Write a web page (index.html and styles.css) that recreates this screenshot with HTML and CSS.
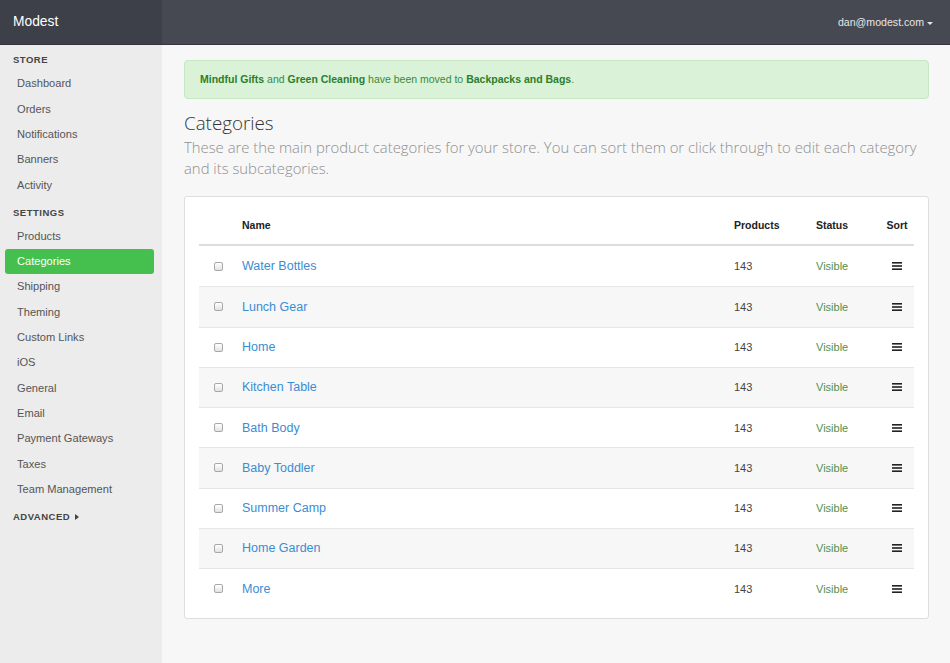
FILE: index.html
```html
<!DOCTYPE html>
<html>
<head>
<meta charset="utf-8">
<link rel="stylesheet" href="styles.css">
</head>
<body>
<div class="app">
  <header class="topbar">
    <div class="brand">Modest</div>
    <div class="topbar-right">
      <span class="user">dan@modest.com <span class="caret"></span></span>
    </div>
  </header>
  <div class="body">
    <aside class="sidebar">
      <div class="nav-head first">STORE</div>
      <a class="nav-item">Dashboard</a>
      <a class="nav-item">Orders</a>
      <a class="nav-item">Notifications</a>
      <a class="nav-item">Banners</a>
      <a class="nav-item">Activity</a>
      <div class="nav-head">SETTINGS</div>
      <a class="nav-item">Products</a>
      <a class="nav-item active">Categories</a>
      <a class="nav-item">Shipping</a>
      <a class="nav-item">Theming</a>
      <a class="nav-item">Custom Links</a>
      <a class="nav-item">iOS</a>
      <a class="nav-item">General</a>
      <a class="nav-item">Email</a>
      <a class="nav-item">Payment Gateways</a>
      <a class="nav-item">Taxes</a>
      <a class="nav-item">Team Management</a>
      <div class="nav-head adv">ADVANCED <span class="tri"></span></div>
    </aside>
    <main class="main">
      <div class="alert"><b>Mindful Gifts</b> and <b>Green Cleaning</b> have been moved to <b>Backpacks and Bags</b>.</div>
      <h1 class="title">Categories</h1>
      <p class="lead">These are the main product categories for your store. You can sort them or click through to edit each category and its subcategories.</p>
      <div class="card">
        <div class="row head">
          <div></div>
          <div>Name</div>
          <div>Products</div>
          <div>Status</div>
          <div class="c">Sort</div>
        </div>
        <div class="row"><div><span class="cb"></span></div><div><a class="link">Water Bottles</a></div><div class="num">143</div><div class="vis">Visible</div><div class="c"><svg class="sort" width="10" height="8" viewBox="0 0 10 8"><rect x="0" y="0" width="10" height="1.6" fill="#222"/><rect x="0" y="3.2" width="10" height="1.6" fill="#222"/><rect x="0" y="6.4" width="10" height="1.6" fill="#222"/></svg></div></div>
        <div class="row"><div><span class="cb"></span></div><div><a class="link">Lunch Gear</a></div><div class="num">143</div><div class="vis">Visible</div><div class="c"><svg class="sort" width="10" height="8" viewBox="0 0 10 8"><rect x="0" y="0" width="10" height="1.6" fill="#222"/><rect x="0" y="3.2" width="10" height="1.6" fill="#222"/><rect x="0" y="6.4" width="10" height="1.6" fill="#222"/></svg></div></div>
        <div class="row"><div><span class="cb"></span></div><div><a class="link">Home</a></div><div class="num">143</div><div class="vis">Visible</div><div class="c"><svg class="sort" width="10" height="8" viewBox="0 0 10 8"><rect x="0" y="0" width="10" height="1.6" fill="#222"/><rect x="0" y="3.2" width="10" height="1.6" fill="#222"/><rect x="0" y="6.4" width="10" height="1.6" fill="#222"/></svg></div></div>
        <div class="row"><div><span class="cb"></span></div><div><a class="link">Kitchen Table</a></div><div class="num">143</div><div class="vis">Visible</div><div class="c"><svg class="sort" width="10" height="8" viewBox="0 0 10 8"><rect x="0" y="0" width="10" height="1.6" fill="#222"/><rect x="0" y="3.2" width="10" height="1.6" fill="#222"/><rect x="0" y="6.4" width="10" height="1.6" fill="#222"/></svg></div></div>
        <div class="row"><div><span class="cb"></span></div><div><a class="link">Bath Body</a></div><div class="num">143</div><div class="vis">Visible</div><div class="c"><svg class="sort" width="10" height="8" viewBox="0 0 10 8"><rect x="0" y="0" width="10" height="1.6" fill="#222"/><rect x="0" y="3.2" width="10" height="1.6" fill="#222"/><rect x="0" y="6.4" width="10" height="1.6" fill="#222"/></svg></div></div>
        <div class="row"><div><span class="cb"></span></div><div><a class="link">Baby Toddler</a></div><div class="num">143</div><div class="vis">Visible</div><div class="c"><svg class="sort" width="10" height="8" viewBox="0 0 10 8"><rect x="0" y="0" width="10" height="1.6" fill="#222"/><rect x="0" y="3.2" width="10" height="1.6" fill="#222"/><rect x="0" y="6.4" width="10" height="1.6" fill="#222"/></svg></div></div>
        <div class="row"><div><span class="cb"></span></div><div><a class="link">Summer Camp</a></div><div class="num">143</div><div class="vis">Visible</div><div class="c"><svg class="sort" width="10" height="8" viewBox="0 0 10 8"><rect x="0" y="0" width="10" height="1.6" fill="#222"/><rect x="0" y="3.2" width="10" height="1.6" fill="#222"/><rect x="0" y="6.4" width="10" height="1.6" fill="#222"/></svg></div></div>
        <div class="row"><div><span class="cb"></span></div><div><a class="link">Home Garden</a></div><div class="num">143</div><div class="vis">Visible</div><div class="c"><svg class="sort" width="10" height="8" viewBox="0 0 10 8"><rect x="0" y="0" width="10" height="1.6" fill="#222"/><rect x="0" y="3.2" width="10" height="1.6" fill="#222"/><rect x="0" y="6.4" width="10" height="1.6" fill="#222"/></svg></div></div>
        <div class="row"><div><span class="cb"></span></div><div><a class="link">More</a></div><div class="num">143</div><div class="vis">Visible</div><div class="c"><svg class="sort" width="10" height="8" viewBox="0 0 10 8"><rect x="0" y="0" width="10" height="1.6" fill="#222"/><rect x="0" y="3.2" width="10" height="1.6" fill="#222"/><rect x="0" y="6.4" width="10" height="1.6" fill="#222"/></svg></div></div>
      </div>
    </main>
  </div>
</div>
</body>
</html>
```
FILE: styles.css
```css
* { box-sizing: border-box; }
html, body { margin: 0; padding: 0; }
body {
  font-family: "Liberation Sans", Arial, sans-serif;
  background: #f7f7f7;
  width: 950px;
  height: 663px;
  overflow: hidden;
}
.app { display: flex; flex-direction: column; height: 663px; }
.topbar {
  display: flex;
  height: 45px;
  background: #464952;
  border-bottom: 1px solid #34363c;
  flex: none;
}
.brand {
  width: 162px;
  background: #3d4048;
  color: #fff;
  font-size: 13.8px;
  padding-left: 13px;
  line-height: 44px;
}
.topbar-right {
  flex: 1;
  display: flex;
  justify-content: flex-end;
  align-items: center;
  padding-right: 17px;
}
.user { color: #e6e6e6; font-size: 10.6px; }
.caret {
  display: inline-block;
  width: 0; height: 0;
  border-left: 3px solid transparent;
  border-right: 3px solid transparent;
  border-top: 3px solid #e6e6e6;
  vertical-align: middle;
  margin-left: 0;
}
.body { display: flex; flex: 1; }
.sidebar {
  width: 162px;
  background: #ececec;
  flex: none;
  padding: 7px 8px 0 5px;
}
.nav-head {
  font-size: 9.5px;
  font-weight: bold;
  letter-spacing: 0.5px;
  color: #444;
  padding-left: 8px;
  height: 23px;
  line-height: 24px;
  margin-top: 3px;
}
.nav-head.first { margin-top: 0; height: 19.35px; line-height: 16px; }
.nav-head.adv { margin-top: 2px; height: 26px; line-height: 26px; }
.tri {
  display: inline-block;
  width: 0; height: 0;
  border-top: 3.5px solid transparent;
  border-bottom: 3.5px solid transparent;
  border-left: 4px solid #444;
  margin-left: 2px;
  vertical-align: 0;
}
.nav-item {
  display: block;
  height: 25.3px;
  line-height: 25.3px;
  padding-left: 12px;
  font-size: 11.1px;
  color: #555;
  border-radius: 3px;
}
.nav-item.active { background: #45bf4e; color: #fff; }
.main { flex: 1; padding: 15px 22px 0 22px; }
.alert {
  height: 39px;
  background: #d9f2d8;
  border: 1px solid #c5e7c3;
  border-radius: 4px;
  color: #3a8a3a;
  font-size: 10.5px;
  line-height: 37px;
  padding-left: 15px;
}
.alert b { color: #2b7f2b; }
.title {
  margin: 11px 0 0 0;
  font-family: "Open Sans", sans-serif;
  font-weight: 300;
  font-size: 18.8px;
  line-height: 26px;
  color: #333;
}
.lead {
  margin: 0;
  font-family: "Open Sans", sans-serif;
  font-weight: 300;
  font-size: 14.85px;
  line-height: 21px;
  color: #8f8f8f;
  padding-top: 1px;
}
.card {
  margin-top: 17px;
  background: #fff;
  border: 1px solid #dedede;
  border-radius: 3px;
  padding: 0 14px 10px 14px;
}
.row {
  display: grid;
  grid-template-columns: 43px 492px 82px 64px 34px;
  align-items: center;
  height: 40.25px;
  border-top: 1px solid #e6e6e6;
  font-size: 11px;
}
.row:nth-child(odd) { background: #f7f7f7; }
.row.head {
  height: 49px;
  border-top: none;
  border-bottom: 2px solid #dddddd;
  font-weight: bold;
  font-size: 10.5px;
  color: #222;
  padding-top: 9px;
  background: none;
}
.row.head + .row { border-top: none; }
.c { text-align: center; }
.cb {
  display: block;
  margin-left: 15px;
  width: 9px;
  height: 9px;
  border: 1px solid #a8a8a8;
  border-radius: 2px;
  background: linear-gradient(#ffffff, #e2e2e2);
}
.link { color: #3a8dd3; font-size: 12.5px; }
.num { color: #444; }
.vis { color: #4f9150; }
.sort { display: block; margin: 0 auto; }
```
